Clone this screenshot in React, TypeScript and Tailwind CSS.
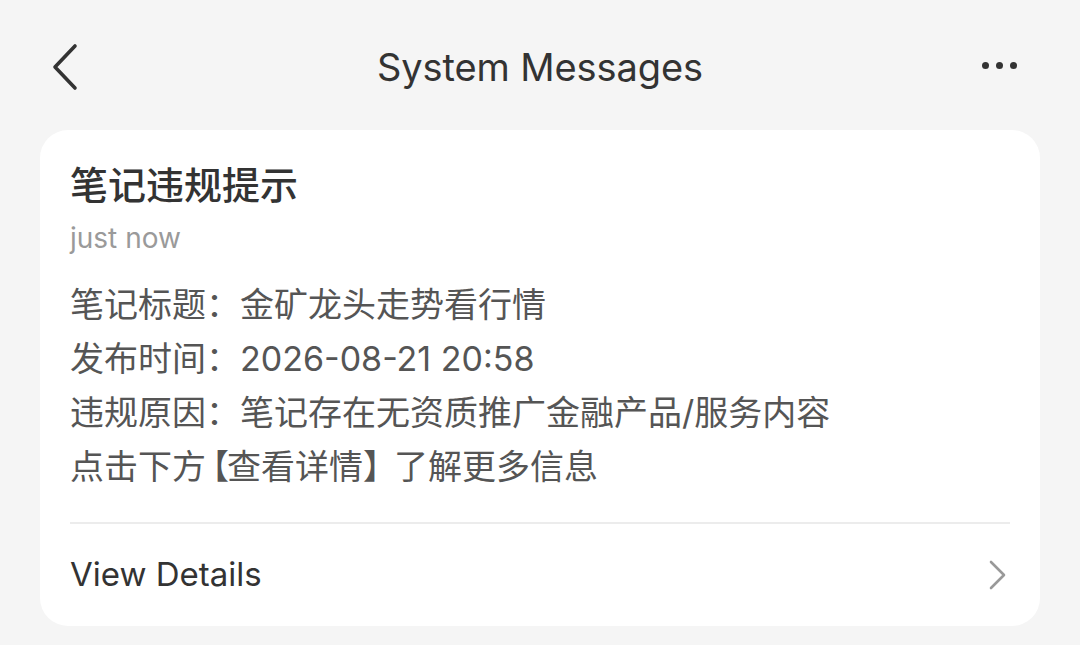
export default function App() {
  const font = { fontFamily: 'Inter, "Noto Sans CJK SC", sans-serif' }
  return (
    <div className="w-[1080px] h-[645px] bg-[#f5f5f5] overflow-hidden" style={font}>
      <header className="relative h-[130px] flex items-center justify-center">
        <button className="absolute left-[50px] top-[43px]">
          <svg width="30" height="48" viewBox="0 0 30 48" fill="none">
            <path d="M25 3 L5 24 L25 45" stroke="#333" strokeWidth="3.6" strokeLinecap="round" strokeLinejoin="round" />
          </svg>
        </button>
        <h1 className="text-[38px] leading-none text-[#333] tracking-[-0.1px] pt-[3px]">System Messages</h1>
        <div className="absolute left-[982px] top-[62px] flex gap-[7px]">
          <span className="w-[7px] h-[7px] rounded-full bg-[#333]" />
          <span className="w-[7px] h-[7px] rounded-full bg-[#333]" />
          <span className="w-[7px] h-[7px] rounded-full bg-[#333]" />
        </div>
      </header>

      <section className="mx-[40px] bg-white rounded-[28px] px-[30px] pt-[32px]">
        <h2 className="text-[38px] leading-[46px] font-medium text-[#333]">笔记违规提示</h2>
        <p className="mt-[13px] text-[28px] leading-[34px] text-[#9a9a9a]">just now</p>
        <div className="mt-[23px] text-[34px] leading-[54px] text-[#555]">
          <p>笔记标题：金矿龙头走势看行情</p>
          <p>发布时间：2026-08-21 20:58</p>
          <p>违规原因：笔记存在无资质推广金融产品/服务内容</p>
          <p>
            点击下方<span className="ml-[-11px] mr-[-2px]">【</span>查看详情<span className="mr-[-3px]">】</span>了解更多信息
          </p>
        </div>
        <div className="mt-[28px] h-[2px] bg-[#ececec]" />
        <div className="h-[102px] flex items-center justify-between pr-[2px]">
          <span className="text-[33px] text-[#333]">View Details</span>
          <svg width="20" height="32" viewBox="0 0 20 32" fill="none">
            <path d="M3 3 L16 16 L3 29" stroke="#999" strokeWidth="2.6" strokeLinecap="round" strokeLinejoin="round" />
          </svg>
        </div>
      </section>
    </div>
  )
}
